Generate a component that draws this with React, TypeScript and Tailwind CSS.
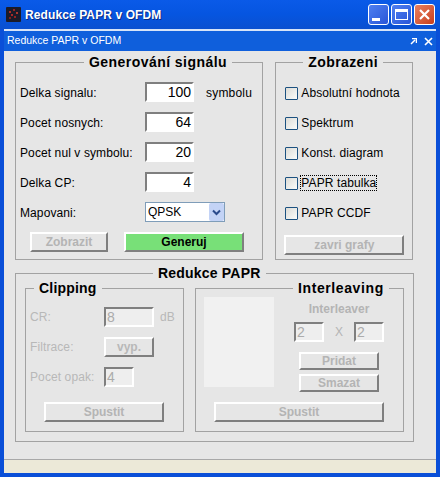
import React from "react";

const font = "font-['Liberation_Sans',Arial,sans-serif]";

const Bevel = ({ className, children }: { className: string; children?: React.ReactNode }) => (
  <div
    className={`flex items-center justify-center border-2 border-t-white border-l-white border-r-[#7f7f7f] border-b-[#7f7f7f] text-[12px] font-bold ${className}`}
  >
    {children}
  </div>
);

const Field = ({ className, value, disabled }: { className: string; value: string; disabled?: boolean }) => (
  <div
    className={`flex h-5 shrink-0 items-center border-2 border-t-[#7f7f7f] border-l-[#7f7f7f] border-r-white border-b-white ${
      disabled
        ? "justify-start bg-[#eeeeee] pl-[1px] text-[14px] text-[#ababab]"
        : "justify-end bg-white pr-[1px] text-[14px] text-black"
    } ${className}`}
  >
    {value}
  </div>
);

const Group = ({
  title,
  className,
  legendClass,
  children,
}: {
  title: string;
  className: string;
  legendClass: string;
  children: React.ReactNode;
}) => (
  <fieldset className={`box-border min-w-0 border border-[#a2a2a2] ${className}`}>
    <legend className={`h-4 px-[5px] text-[14px] leading-4 font-bold text-black ${legendClass}`}>{title}</legend>
    {children}
  </fieldset>
);

const Row = ({ label, value, unit }: { label: string; value: string; unit?: string }) => (
  <div className="flex h-5 items-center">
    <span className="w-[125px] shrink-0 pt-[2px] text-[12px] tracking-[0.1px]">{label}</span>
    <Field className="w-[49px]" value={value} />
    {unit && <span className="ml-[12px] pt-[2px] text-[12px] tracking-[0.2px]">{unit}</span>}
  </div>
);

const Check = ({ label, focus }: { label: string; focus?: boolean }) => (
  <div className="ml-[1px] flex h-[14px] items-center">
    <span className="box-border h-[13px] w-[13px] rounded-[1px] border border-[#1c5180] bg-gradient-to-br from-[#dcdcd7] to-[#fbfbf9]" />
    <span
      className={`ml-[3px] text-[12px] leading-[14px] tracking-[0.1px] ${
        focus ? "outline outline-1 outline-dotted outline-black" : ""
      }`}
    >
      {label}
    </span>
  </div>
);

const WinButton = ({ className, children }: { className: string; children: React.ReactNode }) => (
  <div
    className={`flex h-[21px] w-[21px] items-center justify-center rounded-[3px] border border-white ${className}`}
  >
    {children}
  </div>
);

export default function App() {
  return (
    <div className={`${font} flex h-[477px] w-[440px] flex-col overflow-hidden bg-[#0a4fd8] text-black`}>
      {/* xp title bar */}
      <div className="flex h-[29px] shrink-0 items-center bg-gradient-to-b from-[#0a5ae8] via-[#0655e0] to-[#0a50d0] pr-[5px] pl-[6px]">
        <svg width="15" height="15" viewBox="0 0 15 15" className="shrink-0">
          <rect width="15" height="15" rx="1" fill="#1b1b28" />
          <circle cx="4" cy="5" r="1" fill="#d83028" />
          <circle cx="8" cy="3" r="1" fill="#c02820" />
          <circle cx="11" cy="6" r="1" fill="#e04030" />
          <circle cx="6" cy="8" r="1" fill="#d83028" />
          <circle cx="9" cy="10" r="1" fill="#b82820" />
          <circle cx="4" cy="11" r="1" fill="#a02018" />
        </svg>
        <span className="ml-[4px] flex-1 text-[12px] font-bold tracking-[0.1px] text-white [text-shadow:1px_1px_0_#0a2a80]">
          Redukce PAPR v OFDM
        </span>
        <div className="flex gap-[2px]">
          <WinButton className="bg-gradient-to-br from-[#4f7ff0] to-[#2a55d8]">
            <span className="mt-[9px] mr-[5px] h-[3px] w-2 bg-white" />
          </WinButton>
          <WinButton className="bg-gradient-to-br from-[#4f7ff0] to-[#2a55d8]">
            <span className="box-border h-[11px] w-[13px] border border-t-[3px] border-white" />
          </WinButton>
          <WinButton className="bg-gradient-to-br from-[#e88060] to-[#c83c18]">
            <svg width="13" height="13" viewBox="0 0 13 13">
              <path d="M2 2 L11 11 M11 2 L2 11" stroke="#fff" strokeWidth="2.2" />
            </svg>
          </WinButton>
        </div>
      </div>

      <div className="mx-[4px] flex min-h-0 flex-1 flex-col border-t-2 border-t-[#d7e4f8]">
        {/* sub bar */}
        <div className="flex h-[20px] shrink-0 items-center justify-between bg-[#0f5fdc] pr-[3px] pl-[3px] text-[10.5px] text-white">
          <span>Redukce PAPR v OFDM</span>
          <div className="flex items-center gap-[7px]">
            <svg width="7" height="7" viewBox="0 0 7 7">
              <path d="M1 6 L5 2 M2 0.5 H6.5 V5" stroke="#fff" strokeWidth="1.5" fill="none" />
            </svg>
            <svg width="9" height="9" viewBox="0 0 9 9">
              <path d="M1 1 L8 8 M8 1 L1 8" stroke="#fff" strokeWidth="1.6" />
            </svg>
          </div>
        </div>

        <div className="flex min-h-0 flex-1 flex-col bg-[#e6e6e6] pt-[3px] pr-[23px] pl-[11px]">
          <div className="flex gap-[12px]">
            <Group
              title="Generování signálu"
              className="h-[206px] w-[249px] pr-[4px] pl-[4px]"
              legendClass="ml-[64px] tracking-[0.45px]"
            >
              <div className="flex flex-col gap-[10px] pt-[12px]">
                <Row label="Delka signalu:" value="100" unit="symbolu" />
                <Row label="Pocet nosnych:" value="64" />
                <Row label="Pocet nul v symbolu:" value="20" />
                <Row label="Delka CP:" value="4" />
                <div className="flex h-5 items-center">
                  <span className="w-[125px] shrink-0 pt-[2px] text-[12px] tracking-[0.1px]">Mapovani:</span>
                  <div className="flex h-[20px] w-[80px] items-center justify-between border border-[#7f9db9] bg-white pl-[2px] text-[12px]">
                    QPSK
                    <span className="flex h-[18px] w-[15px] items-center justify-center rounded-[2px] bg-[#c3d3f6]">
                      <svg width="9" height="7" viewBox="0 0 9 7">
                        <path d="M1 1.5 L4.5 5 L8 1.5" stroke="#2a4a8c" strokeWidth="2" fill="none" />
                      </svg>
                    </span>
                  </div>
                </div>
              </div>
              <div className="mt-[10px] flex gap-[16px] pl-[10px]">
                <Bevel className="h-5 w-[78px] text-[#b4b4b4]">Zobrazit</Bevel>
                <Bevel className="h-5 w-[120px] border-t-[#a8f0a8] border-l-[#a8f0a8] bg-[#78e078] text-black">Generuj</Bevel>
              </div>
            </Group>

            <Group
              title="Zobrazeni"
              className="h-[206px] w-[138px] pr-[8px] pl-[8px]"
              legendClass="ml-[19px] tracking-[0.4px]"
            >
              <div className="flex flex-col gap-[16px] pt-[16px]">
                <Check label="Absolutní hodnota" />
                <Check label="Spektrum" />
                <Check label="Konst. diagram" />
                <Check label="PAPR tabulka" focus />
                <Check label="PAPR CCDF" />
              </div>
              <Bevel className="mt-[15px] h-5 w-[120px] text-[#b4b4b4]">zavri grafy</Bevel>
            </Group>
          </div>

          <Group
            title="Redukce PAPR"
            className="mt-[5px] h-[177px] w-[399px] pr-[9px] pl-[9px]"
            legendClass="ml-[128px] tracking-[0.2px]"
          >
            <div className="-mt-px flex gap-[11px]">
              <Group
                title="Clipping"
                className="h-[152px] w-[159px] pr-0 pl-[4px]"
                legendClass="ml-[4px] tracking-[0.2px]"
              >
                <div className="flex flex-col gap-[10px] pt-[11px] text-[12px] tracking-[0.1px] text-[#b8b8b8]">
                  <div className="flex h-5 items-center">
                    <span className="w-[74px]">CR:</span>
                    <Field className="w-[50px]" value="8" disabled />
                    <span className="ml-[6px]">dB</span>
                  </div>
                  <div className="flex h-5 items-center">
                    <span className="w-[74px]">Filtrace:</span>
                    <Bevel className="h-5 w-[50px] tracking-normal">vyp.</Bevel>
                  </div>
                  <div className="flex h-5 items-center">
                    <span className="w-[74px]">Pocet opak:</span>
                    <Field className="w-[30px]" value="4" disabled />
                  </div>
                </div>
                <Bevel className="mt-[15px] ml-[14px] h-5 w-[120px] text-[#b4b4b4]">Spustit</Bevel>
              </Group>

              <Group
                title="Interleaving"
                className="h-[152px] w-[209px] pr-0 pl-[8px]"
                legendClass="ml-[89px] tracking-[0.6px]"
              >
                <div className="flex h-[90px] pt-[1px]">
                  <div className="h-[90px] w-[70px] bg-[#f1f1f1]" />
                  <div className="ml-[20px] flex w-[90px] flex-col items-center text-[#b4b4b4]">
                    <span className="mt-[5px] h-[14px] text-[12px] leading-[14px] font-bold">Interleaver</span>
                    <div className="mt-[6px] flex items-center">
                      <Field className="w-[30px]" value="2" disabled />
                      <span className="w-[30px] text-center text-[12px]">X</span>
                      <Field className="w-[30px]" value="2" disabled />
                    </div>
                    <Bevel className="mt-[10px] h-[18px] w-[80px] shrink-0">Pridat</Bevel>
                    <Bevel className="mt-[4px] h-[18px] w-[80px] shrink-0">Smazat</Bevel>
                  </div>
                </div>
                <Bevel className="mt-[16px] ml-[10px] h-5 w-[170px] text-[#b4b4b4]">Spustit</Bevel>
              </Group>
            </div>
          </Group>

          <div className="flex-1" />
        </div>

        <div className="h-[14px] shrink-0 border-t border-t-[#a8a8a8] bg-[#ece9d8]" />
      </div>
      <div className="h-[4px] shrink-0" />
    </div>
  );
}
